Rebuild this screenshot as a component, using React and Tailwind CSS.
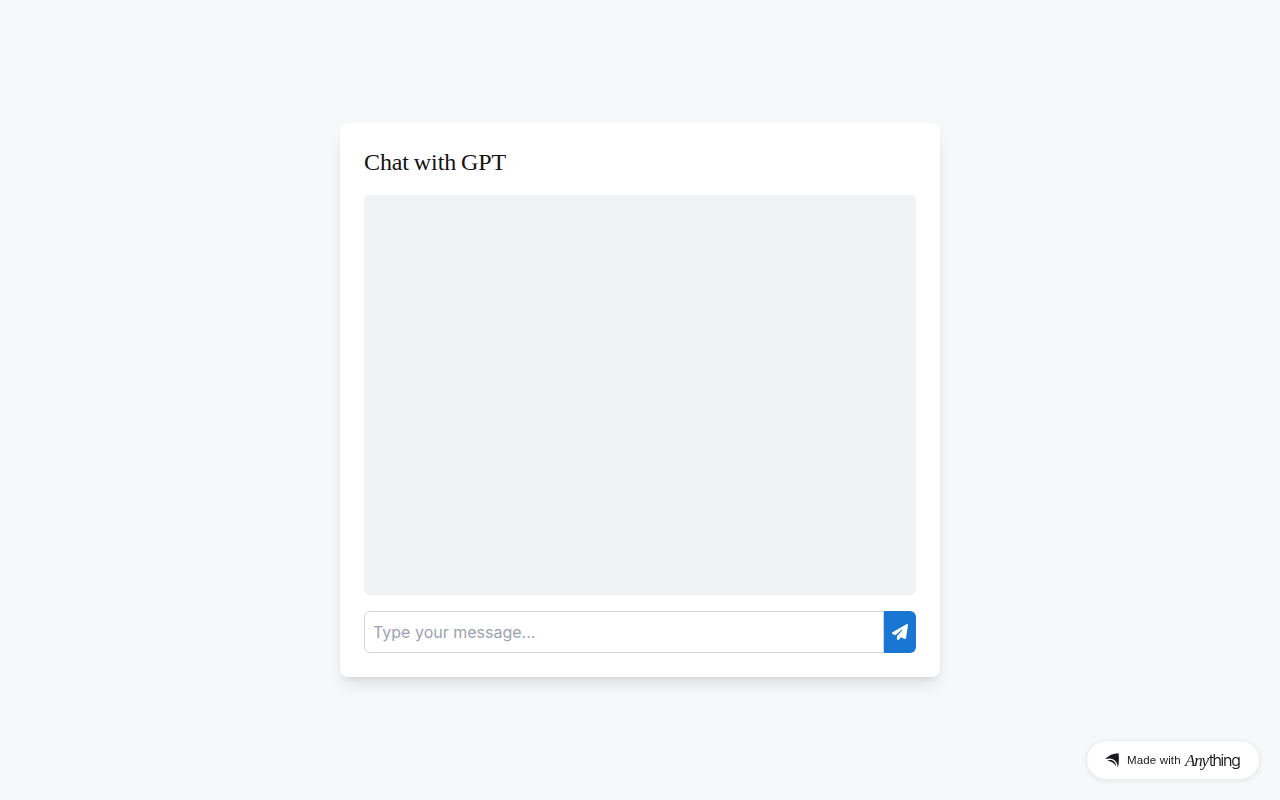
import { FaPaperPlane } from "react-icons/fa6";

function ChatCard() {
  return (
    <main className="w-[600px] rounded-lg bg-white p-6 shadow-lg">
      <h1 className="mb-4 h-8 whitespace-nowrap font-['Liberation_Serif',serif] text-[24px] leading-[30px] tracking-[-0.1px] text-[#121212] [word-spacing:-1px]">
        Chat with GPT
      </h1>
      <div className="mb-4 h-[400px] overflow-y-auto rounded-md bg-[#f0f2f5]" />
      <form className="flex h-[42px]" onSubmit={(e) => e.preventDefault()}>
        <input
          type="text"
          placeholder="Type your message..."
          className="min-w-0 grow rounded-l-md border border-[#d1d5db] bg-white p-2 font-['Inter',sans-serif] text-base text-[#121212] outline-none placeholder:text-[#9ca3af]"
        />
        <button
          type="submit"
          aria-label="Send"
          className="flex w-8 items-center justify-center rounded-r-md bg-[#1976d2] text-white"
        >
          <FaPaperPlane className="size-4" />
        </button>
      </form>
    </main>
  );
}

function MadeWithBadge() {
  return (
    <a className="fixed right-5 bottom-5 flex h-10 w-[174px] items-center rounded-full border border-[#ebecee] bg-white pl-[18px] text-[#18191b] shadow-[0_1px_4px_rgba(0,0,0,0.08)]">
      <svg viewBox="0 0 14 15" className="h-[15px] w-[14px] shrink-0" fill="currentColor">
        <path d="M0 6C3.5 2.5 8 .3 13.5 .2C14.1 5 14 10 12.9 15C12.6 8.2 8.5 3.8 0 6Z" />
        <path d="M2 8C6.5 5.6 10.8 8.3 11.3 13.6C9.6 10.4 6.8 8 2 8Z" />
      </svg>
      <span className="ml-2 w-[54px] whitespace-nowrap font-['Liberation_Sans',sans-serif] text-[11.5px] leading-4 tracking-[0.15px]">
        Made with
      </span>
      <span className="ml-[4px] flex items-baseline whitespace-nowrap leading-5">
        <span className="w-6 font-['Liberation_Serif',serif] text-[17px] tracking-[-1.2px] italic">
          Any
        </span>
        <span className="font-['Inter',sans-serif] text-[16px] font-light tracking-[-1.3px] [-webkit-text-stroke:0.2px]">
          thing
        </span>
      </span>
    </a>
  );
}

export default function App() {
  return (
    <div className="flex min-h-screen items-center justify-center bg-[#f7f8fa]">
      <ChatCard />
      <MadeWithBadge />
    </div>
  );
}
